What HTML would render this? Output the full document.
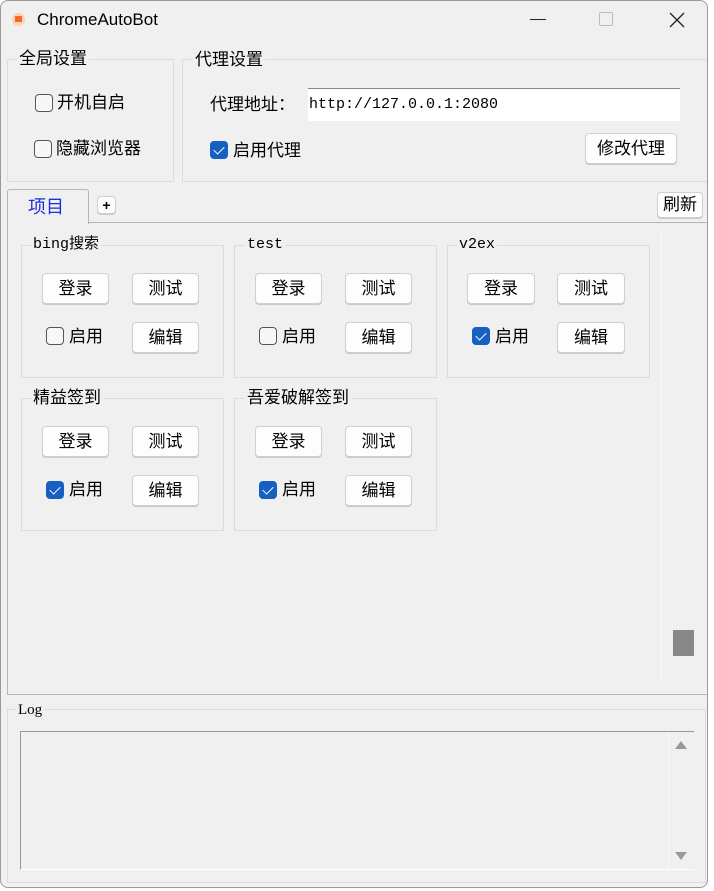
<!DOCTYPE html>
<html><head><meta charset="utf-8"><style>
*{box-sizing:border-box;margin:0;padding:0}
body{width:714px;height:891px;background:#fff;position:relative;overflow:hidden;font-family:"Liberation Sans","Noto Sans CJK SC",sans-serif;color:#000}
.win{position:absolute;left:0;top:0;width:708px;height:888px;background:#f0f0f0;border:1px solid #9a9a9a;border-radius:8px;overflow:hidden}
.in{position:absolute;left:-1px;top:-1px;width:708px;height:888px}
.a{position:absolute}
.grp{position:absolute;border:1px solid #dcdcdc}
.lbl{position:absolute;background:#f0f0f0;font-size:17px;line-height:20px;padding:0 2px}
.btn{position:absolute;background:#fdfdfd;border:1px solid #d0d0d0;border-radius:4px;font-size:17px;text-align:center;box-shadow:0 1px 0 #c8c8c8}
.cb{position:absolute;width:18px;height:18px;border:1.5px solid #555;border-radius:4px;background:#f7f7f7}
.cb.on{background:#1660c4;border-color:#1660c4}
.cb.on:after{content:"";position:absolute;left:5px;top:2px;width:5px;height:9px;border:solid #fff;border-width:0 1.5px 1.5px 0;transform:rotate(45deg)}
.t{position:absolute;font-size:17px;line-height:20px}
.mono{font-family:"Liberation Mono","DejaVu Sans Mono",monospace}
</style></head><body>
<div class="win"><div class="in">
<div class="a" style="left:12px;top:13px;width:13px;height:13px;border-radius:50%;background:#fbd1b8"></div>
<div class="a" style="left:15px;top:16px;width:7px;height:6px;background:#f06a2a"></div>
<div class="t" style="left:37px;top:10px;font-size:17px">ChromeAutoBot</div>
<div class="a" style="left:530px;top:19px;width:16px;height:1px;background:#222"></div>
<div class="a" style="left:599px;top:12px;width:14px;height:14px;border:1px solid #bbb;border-radius:2px"></div>
<svg class="a" style="left:668px;top:11px" width="18" height="18"><path d="M2 2L16 16M16 2L2 16" stroke="#222" stroke-width="1.3"/></svg>

<div class="grp" style="left:7px;top:59px;width:167px;height:123px"></div>
<div class="lbl" style="left:17px;top:49px">全局设置</div>
<div class="cb" style="left:35px;top:94px"></div><div class="t" style="left:57px;top:93px">开机自启</div>
<div class="cb" style="left:34px;top:140px"></div><div class="t" style="left:56px;top:139px">隐藏浏览器</div>

<div class="grp" style="left:182px;top:59px;width:526px;height:123px"></div>
<div class="lbl" style="left:193px;top:50px">代理设置</div>
<div class="t" style="left:210px;top:95px">代理地址：</div>
<div class="a mono" style="left:308px;top:88px;width:372px;height:33px;background:#fff;border-top:1px solid #888;font-size:15px;line-height:32px;padding-left:1px">http://127.0.0.1:2080</div>
<div class="cb on" style="left:210px;top:141px"></div><div class="t" style="left:233px;top:141px">启用代理</div>
<div class="btn" style="left:585px;top:133px;width:92px;height:31px;line-height:29px">修改代理</div>

<div class="a" style="left:7px;top:222px;width:701px;height:473px;border:1px solid #a8b8c8"></div>
<div class="a" style="left:7px;top:189px;width:82px;height:35px;background:#f0f0f0;border:1px solid #a8b8c8;border-bottom:none;border-radius:3px 3px 0 0;color:#1a2fd8;font-size:18px;line-height:34px;padding-left:20px">项目</div>
<div class="btn" style="left:97px;top:196px;width:19px;height:18px;font-size:14px;line-height:16px;font-weight:bold">+</div>
<div class="btn" style="left:657px;top:192px;width:46px;height:26px;line-height:24px">刷新</div>
<div class="a" style="left:661px;top:230px;width:1px;height:452px;background:#fafafa"></div>
<div class="a" style="left:673px;top:630px;width:21px;height:26px;background:#888"></div>

<div class="grp" style="left:21px;top:245px;width:203px;height:133px"></div>
<div class="lbl mono" style="left:31px;top:235px;font-size:15px">bing搜索</div>
<div class="btn" style="left:42px;top:273px;width:67px;height:31px;line-height:29px">登录</div>
<div class="btn" style="left:132px;top:273px;width:67px;height:31px;line-height:29px">测试</div>
<div class="cb" style="left:46px;top:327px"></div><div class="t" style="left:69px;top:327px">启用</div>
<div class="btn" style="left:132px;top:322px;width:67px;height:31px;line-height:29px">编辑</div>

<div class="grp" style="left:234px;top:245px;width:203px;height:133px"></div>
<div class="lbl mono" style="left:245px;top:235px;font-size:15px">test</div>
<div class="btn" style="left:255px;top:273px;width:67px;height:31px;line-height:29px">登录</div>
<div class="btn" style="left:345px;top:273px;width:67px;height:31px;line-height:29px">测试</div>
<div class="cb" style="left:259px;top:327px"></div><div class="t" style="left:282px;top:327px">启用</div>
<div class="btn" style="left:345px;top:322px;width:67px;height:31px;line-height:29px">编辑</div>

<div class="grp" style="left:447px;top:245px;width:203px;height:133px"></div>
<div class="lbl mono" style="left:457px;top:235px;font-size:15px">v2ex</div>
<div class="btn" style="left:467px;top:273px;width:68px;height:31px;line-height:29px">登录</div>
<div class="btn" style="left:557px;top:273px;width:68px;height:31px;line-height:29px">测试</div>
<div class="cb on" style="left:472px;top:327px"></div><div class="t" style="left:495px;top:327px">启用</div>
<div class="btn" style="left:557px;top:322px;width:68px;height:31px;line-height:29px">编辑</div>

<div class="grp" style="left:21px;top:398px;width:203px;height:133px"></div>
<div class="lbl" style="left:31px;top:388px">精益签到</div>
<div class="btn" style="left:42px;top:426px;width:67px;height:31px;line-height:29px">登录</div>
<div class="btn" style="left:132px;top:426px;width:67px;height:31px;line-height:29px">测试</div>
<div class="cb on" style="left:46px;top:481px"></div><div class="t" style="left:69px;top:480px">启用</div>
<div class="btn" style="left:132px;top:475px;width:67px;height:31px;line-height:29px">编辑</div>

<div class="grp" style="left:234px;top:398px;width:203px;height:133px"></div>
<div class="lbl" style="left:245px;top:388px">吾爱破解签到</div>
<div class="btn" style="left:255px;top:426px;width:67px;height:31px;line-height:29px">登录</div>
<div class="btn" style="left:345px;top:426px;width:67px;height:31px;line-height:29px">测试</div>
<div class="cb on" style="left:259px;top:481px"></div><div class="t" style="left:282px;top:480px">启用</div>
<div class="btn" style="left:345px;top:475px;width:67px;height:31px;line-height:29px">编辑</div>

<div class="grp" style="left:7px;top:709px;width:699px;height:174px"></div>
<div class="lbl" style="left:16px;top:700px;font-family:'Liberation Serif',serif;font-size:15px">Log</div>
<div class="a" style="left:20px;top:731px;width:674px;height:139px;border-top:1px solid #999;border-left:1px solid #999;border-bottom:1px solid #fff;background:#f0f0f0"></div>
<div class="a" style="left:668px;top:733px;width:1px;height:135px;background:#fafafa"></div>
<svg class="a" style="left:674px;top:740px" width="14" height="10"><path d="M7 1L13 9H1Z" fill="#999"/></svg>
<svg class="a" style="left:674px;top:851px" width="14" height="10"><path d="M1 1H13L7 9Z" fill="#999"/></svg>
</div></div>
</body></html>
